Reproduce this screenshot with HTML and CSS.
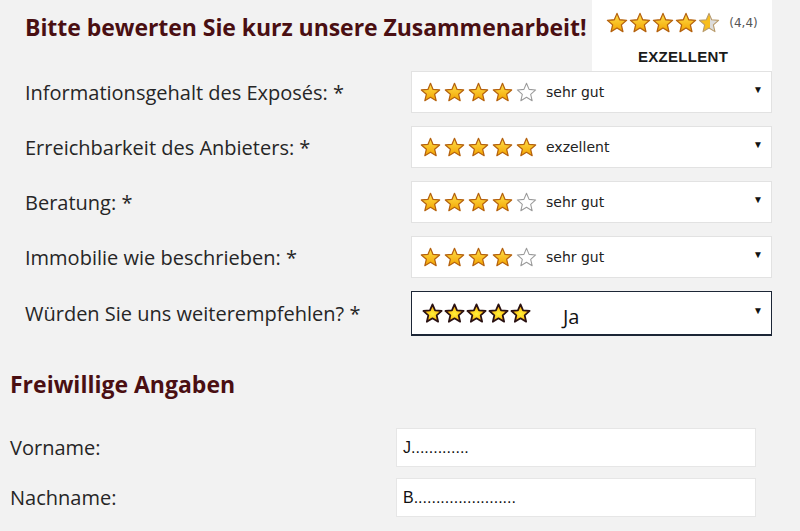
FILE: index.html
```html
<!DOCTYPE html>
<html lang="de">
<head>
<meta charset="utf-8">
<title>Bewertung</title>
<link rel="stylesheet" href="styles.css">
</head>
<body>
<svg class="defs" width="0" height="0" aria-hidden="true">
  <defs>
    <linearGradient id="gold" x1="0" y1="0" x2="0" y2="1">
      <stop offset="0" stop-color="#ffe14d"/>
      <stop offset="1" stop-color="#f3a300"/>
    </linearGradient>
    <linearGradient id="half" x1="0" y1="0" x2="1" y2="0">
      <stop offset="0" stop-color="#f8be1c"/>
      <stop offset="0.55" stop-color="#f8be1c"/>
      <stop offset="0.55" stop-color="#dcdcdc"/>
      <stop offset="1" stop-color="#dcdcdc"/>
    </linearGradient>
    <radialGradient id="fire" cx="0.5" cy="0.55" r="0.55">
      <stop offset="0" stop-color="#fff23a"/>
      <stop offset="0.55" stop-color="#ffc81a"/>
      <stop offset="1" stop-color="#e2380c"/>
    </radialGradient>
    <symbol id="star" viewBox="0 0 24 24">
      <polygon points="12,1.5 14.94,8.45 22.46,9.1 16.76,14.05 18.47,21.4 12,17.5 5.53,21.4 7.24,14.05 1.54,9.1 9.06,8.45"/>
    </symbol>
  </defs>
</svg>

<main class="page">
  <section class="rating">
    <header class="rating-head">
      <h1 class="title">Bitte bewerten Sie kurz unsere Zusammenarbeit!</h1>
      <div class="badge">
        <div class="badge-stars">
          <svg class="star full big"><use href="#star"/></svg>
          <svg class="star full big"><use href="#star"/></svg>
          <svg class="star full big"><use href="#star"/></svg>
          <svg class="star full big"><use href="#star"/></svg>
          <svg class="star halfstar big"><use href="#star"/></svg>
          <span class="score">(4,4)</span>
        </div>
        <div class="badge-label">EXZELLENT</div>
      </div>
    </header>

    <div class="row">
      <label class="label">Informationsgehalt des Exposés: *</label>
      <div class="select">
        <span class="stars">
          <svg class="star full"><use href="#star"/></svg><svg class="star full"><use href="#star"/></svg><svg class="star full"><use href="#star"/></svg><svg class="star full"><use href="#star"/></svg><svg class="star empty"><use href="#star"/></svg>
        </span>
        <span class="value">sehr gut</span>
        <span class="arrow">▼</span>
      </div>
    </div>

    <div class="row">
      <label class="label">Erreichbarkeit des Anbieters: *</label>
      <div class="select">
        <span class="stars">
          <svg class="star full"><use href="#star"/></svg><svg class="star full"><use href="#star"/></svg><svg class="star full"><use href="#star"/></svg><svg class="star full"><use href="#star"/></svg><svg class="star full"><use href="#star"/></svg>
        </span>
        <span class="value">exzellent</span>
        <span class="arrow">▼</span>
      </div>
    </div>

    <div class="row">
      <label class="label">Beratung: *</label>
      <div class="select">
        <span class="stars">
          <svg class="star full"><use href="#star"/></svg><svg class="star full"><use href="#star"/></svg><svg class="star full"><use href="#star"/></svg><svg class="star full"><use href="#star"/></svg><svg class="star empty"><use href="#star"/></svg>
        </span>
        <span class="value">sehr gut</span>
        <span class="arrow">▼</span>
      </div>
    </div>

    <div class="row">
      <label class="label">Immobilie wie beschrieben: *</label>
      <div class="select">
        <span class="stars">
          <svg class="star full"><use href="#star"/></svg><svg class="star full"><use href="#star"/></svg><svg class="star full"><use href="#star"/></svg><svg class="star full"><use href="#star"/></svg><svg class="star empty"><use href="#star"/></svg>
        </span>
        <span class="value">sehr gut</span>
        <span class="arrow">▼</span>
      </div>
    </div>

    <div class="row">
      <label class="label">Würden Sie uns weiterempfehlen? *</label>
      <div class="select focused">
        <span class="stars tight">
          <svg class="star fire"><use href="#star"/></svg><svg class="star fire"><use href="#star"/></svg><svg class="star fire"><use href="#star"/></svg><svg class="star fire"><use href="#star"/></svg><svg class="star fire"><use href="#star"/></svg>
        </span>
        <span class="value big">Ja</span>
        <span class="arrow">▼</span>
      </div>
    </div>
  </section>

  <section class="optional">
    <h2 class="subtitle">Freiwillige Angaben</h2>
    <div class="field">
      <label class="label">Vorname:</label>
      <div class="input">J.............</div>
    </div>
    <div class="field">
      <label class="label">Nachname:</label>
      <div class="input">B.......................</div>
    </div>
  </section>
</main>
</body>
</html>
```

FILE: styles.css
```css
html, body {
  margin: 0;
  padding: 0;
}

body {
  background: #f2f2f2;
  font-family: "Open Sans", "Noto Sans", sans-serif;
  color: #222;
  width: 800px;
  height: 531px;
  overflow: hidden;
}

.defs {
  position: absolute;
  width: 0;
  height: 0;
}

.page {
  display: flex;
  flex-direction: column;
}

.rating {
  padding-left: 25px;
  width: 747px;
  display: flex;
  flex-direction: column;
}

.rating-head {
  display: flex;
  justify-content: space-between;
  align-items: flex-start;
  height: 71px;
}

.title {
  margin: 11px 0 0;
  font-size: 23px;
  font-weight: 700;
  color: #4a0f12;
  letter-spacing: -0.05px;
}

.badge {
  width: 180px;
  height: 71px;
  background: #fff;
  display: flex;
  flex-direction: column;
  align-items: center;
}

.badge-stars {
  display: flex;
  align-items: center;
  margin-top: 12px;
  margin-left: 0;
}

.score {
  font-family: "DejaVu Sans", sans-serif;
  font-size: 12px;
  color: #555;
  margin-left: 8px;
}

.badge-label {
  margin-top: 14px;
  margin-left: 2px;
  font-family: "Liberation Sans", Arial, sans-serif;
  font-weight: 700;
  font-size: 15px;
  color: #1a1a1a;
  letter-spacing: 0.3px;
}

.row {
  display: flex;
  align-items: center;
  margin-bottom: 13px;
}

.label {
  flex: 1;
  font-size: 20px;
  color: #262626;
}

.select {
  width: 361px;
  height: 42px;
  background: #fff;
  border: 1px solid #e2e2e2;
  display: flex;
  align-items: center;
  padding: 0 0 0 8px;
  box-sizing: border-box;
}

.select.focused {
  height: 44px;
  border: 1px solid #1c2636;
  box-shadow: 0 1px 0 #1c2636;
}

.stars {
  display: flex;
  gap: 3px;
  width: 118px;
}

.stars.tight {
  gap: 1px;
  width: 112px;
  margin-left: 2px;
}

.star {
  width: 21px;
  height: 21px;
  stroke-linejoin: round;
}

.star.big {
  width: 22px;
  height: 22px;
  margin-right: 1px;
}

.star.full {
  fill: url(#gold);
  stroke: #b5620e;
  stroke-width: 1.4;
}

.star.halfstar {
  fill: url(#half);
  stroke: #b89a6a;
  stroke-width: 1.2;
}

.star.empty {
  fill: #fff;
  stroke: #9a9a9a;
  stroke-width: 1.2;
}

.star.fire {
  fill: url(#fire);
  stroke: #2a1212;
  stroke-width: 2;
}

.value {
  font-family: "DejaVu Sans", Verdana, sans-serif;
  font-size: 14px;
  color: #222;
  margin-left: 8px;
}

.value.big {
  font-family: "Open Sans", sans-serif;
  font-size: 20px;
  margin-left: 29px;
  margin-top: 6px;
  color: #111;
}

.arrow {
  margin-left: auto;
  margin-right: 8px;
  font-size: 10px;
  color: #111;
  margin-top: -6px;
}

.optional {
  padding-left: 10px;
  display: flex;
  flex-direction: column;
  margin-top: 20px;
}

.subtitle {
  margin: 0 0 28px;
  font-size: 23px;
  font-weight: 700;
  color: #4a0f12;
}

.field {
  display: flex;
  align-items: center;
  margin-bottom: 11px;
}

.field .label {
  flex: 0 0 386px;
}

.input {
  width: 360px;
  height: 39px;
  box-sizing: border-box;
  background: #fff;
  border: 1px solid #e6e6e6;
  padding-left: 6px;
  font-family: "Liberation Sans", Arial, sans-serif;
  font-size: 16px;
  line-height: 37px;
  color: #111;
}
```
